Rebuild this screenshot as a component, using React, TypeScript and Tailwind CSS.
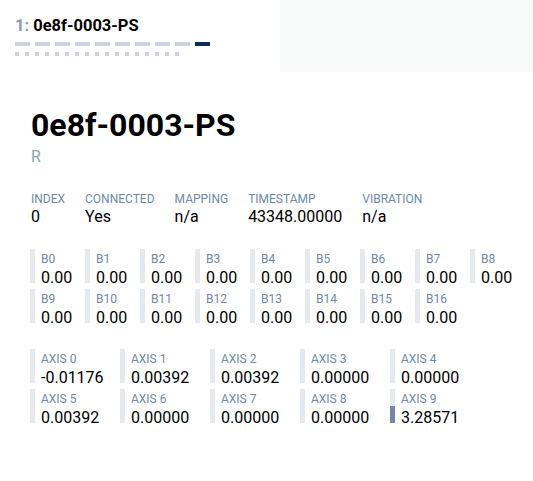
import React from "react";

const buttons = Array.from({ length: 17 }, (_, i) => ({ name: `B${i}`, value: 0 }));
const axes = [-0.01176, 0.00392, 0.00392, 0, 0, 0.00392, 0, 0, 0, 3.28571];

const info = [
    { label: "INDEX", value: "0" },
    { label: "CONNECTED", value: "Yes" },
    { label: "MAPPING", value: "n/a" },
    { label: "TIMESTAMP", value: "43348.00000" },
    { label: "VIBRATION", value: "n/a" },
];

function AxisBar({ value }: { value: number }) {
    const v = Math.max(-1, Math.min(1, value));
    // fill grows from the middle of the bar, up for negative, down for positive
    const neg = v < 0 ? Math.round(-v * 17) : 0;
    const pos = v > 0 ? Math.round(v * 17) : 0;
    return (
        <div className="w-[5px] h-[34px] shrink-0 bg-[#e6e9ed] flex flex-col">
            <div className="flex-1 flex flex-col justify-end">
                <div className="bg-[#7189a8]" style={{ height: neg }} />
            </div>
            <div className="flex-1 flex flex-col">
                <div className="bg-[#7189a8]" style={{ height: pos }} />
            </div>
        </div>
    );
}

function Cell({ label, value, bar }: { label: string; value: string; bar: React.ReactNode }) {
    return (
        <div className="flex h-[34px]">
            {bar}
            <div className="pl-[6px] pt-[2px]">
                <div className="text-[12px] leading-[16px] text-[#6f89aa]">{label}</div>
                <div className="text-[16px] leading-[18px] mt-[2px]">{value}</div>
            </div>
        </div>
    );
}

export default function App() {
    return (
        <div className="bg-white min-h-[481px] text-black" style={{ fontFamily: "Roboto, 'Liberation Sans', sans-serif" }}>
            {/* tabs */}
            <div className="flex h-[72px]">
                <div className="w-[280px] bg-white pl-[15px] pt-[16px]">
                    <div className="text-[16.5px] leading-[20px] font-bold">
                        <span className="text-[#8a9bb0]">1: </span>0e8f-0003-PS
                    </div>
                    <div className="flex gap-[5px] mt-[6px]">
                        {axes.map((a, i) => (
                            <div key={i} className={`w-[15px] h-[4px] ${i === 9 ? "bg-[#0b2d5b]" : "bg-[#cbd3de]"}`} />
                        ))}
                    </div>
                    <div className="flex gap-[6px] mt-[6px]">
                        {buttons.map((b) => (
                            <div key={b.name} className="w-[4px] h-[4px] bg-[#cbd3de]" />
                        ))}
                    </div>
                </div>
                <div className="flex-1 bg-[#f8faf9]" />
            </div>

            <div className="px-[30px]">
                <h1 className="mt-[33px] text-[32px] leading-[40px] font-bold pl-[1px]">0e8f-0003-PS</h1>
                <div className="mt-[2px] text-[16px] leading-[20px] text-[#8fa3bc] pl-[1px]">R</div>

                <div className="flex gap-5 mt-[24px] pl-[1px]">
                    {info.map((item) => (
                        <div key={item.label}>
                            <div className="text-[12px] leading-[16px] text-[#6f89aa]">{item.label}</div>
                            <div className="text-[16px] leading-[20px]">{item.value}</div>
                        </div>
                    ))}
                </div>

                <div className="grid grid-cols-[repeat(9,55px)] gap-y-[6px] mt-[22px]">
                    {buttons.map((b) => (
                        <Cell
                            key={b.name}
                            label={b.name}
                            value={b.value.toFixed(2)}
                            bar={<div className="w-[5px] h-[34px] shrink-0 bg-[#e6e9ed]" />}
                        />
                    ))}
                </div>

                <div className="grid grid-cols-[repeat(5,90px)] gap-y-[6px] mt-[26px]">
                    {axes.map((a, i) => (
                        <Cell key={i} label={`AXIS ${i}`} value={a.toFixed(5)} bar={<AxisBar value={a} />} />
                    ))}
                </div>
            </div>
        </div>
    );
}
